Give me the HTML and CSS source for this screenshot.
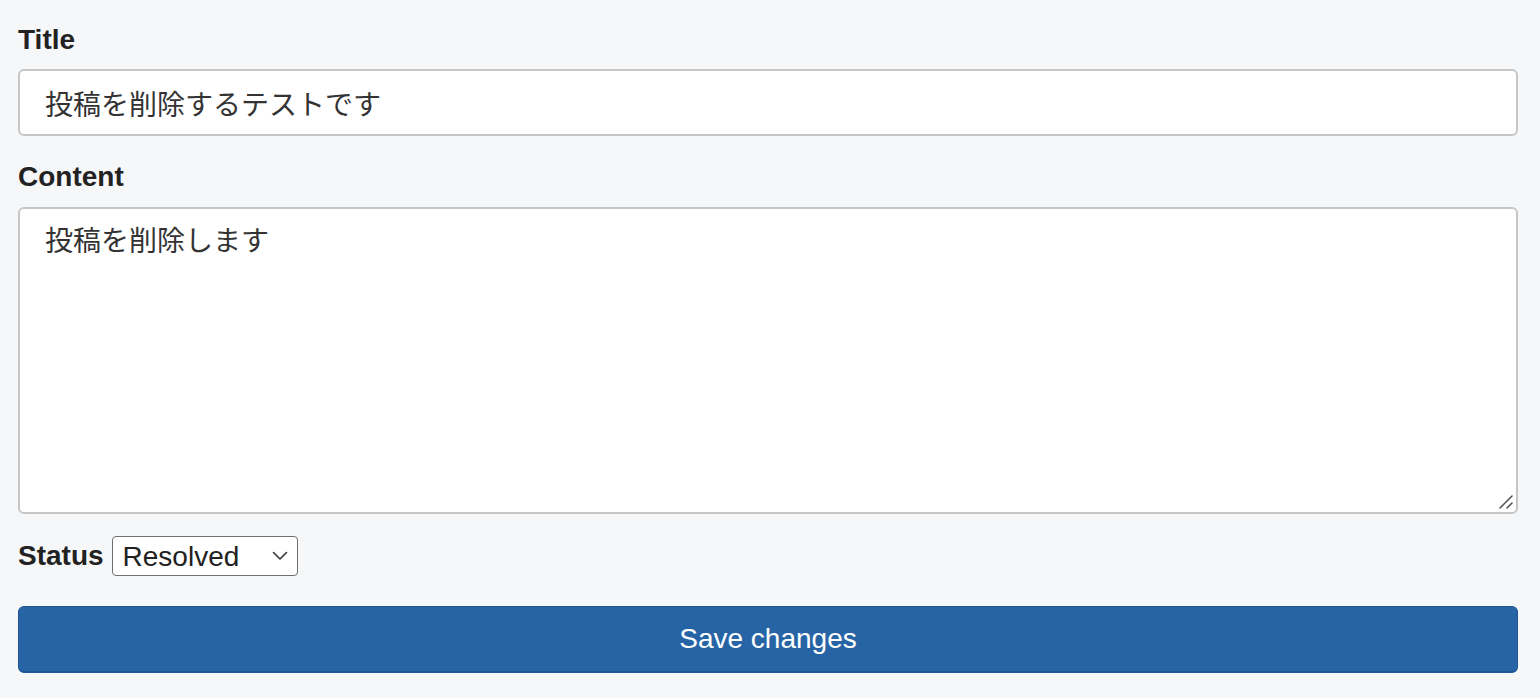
FILE: index.html
```html
<!DOCTYPE html>
<html lang="ja">
<head>
<meta charset="utf-8">
<title>Edit post</title>
<link rel="stylesheet" href="styles.css">
</head>
<body>
<form class="form">
  <label class="label" for="title">Title</label>
  <input class="input" id="title" type="text" value="投稿を削除するテストです">
  <label class="label label-content" for="content">Content</label>
  <div class="textarea-wrap">
    <textarea class="textarea" id="content">投稿を削除します</textarea>
    <svg class="grip" width="14" height="14" viewBox="0 0 14 14"><path d="M1 13 L13 1 M8 13 L13 8" fill="none" stroke="#555" stroke-width="1.6" stroke-linecap="round"/></svg>
  </div>
  <div class="status-row">
    <label class="label label-inline" for="status">Status</label>
    <div class="select-wrap">
      <select class="select" id="status">
        <option>Open</option>
        <option selected>Resolved</option>
      </select>
      <svg class="chevron" width="16" height="10" viewBox="0 0 16 10"><path d="M1.5 1.5 L8 8 L14.5 1.5" fill="none" stroke="#333" stroke-width="1.6" stroke-linecap="round" stroke-linejoin="round"/></svg>
    </div>
  </div>
  <button class="btn" type="button">Save changes</button>
</form>
</body>
</html>
```
FILE: styles.css
```css
html, body {
  margin: 0;
  padding: 0;
  background: #f6f7f9;
}
body {
  font-family: "Liberation Sans", Arial, "Noto Sans CJK JP", sans-serif;
  color: #222;
}
.form {
  display: flex;
  flex-direction: column;
  padding: 23px 22px 0 18px;
}
.label {
  display: block;
  font-size: 28px;
  font-weight: bold;
  line-height: 34px;
  margin-bottom: 12px;
  color: #222;
}
.label-content {
  margin-top: 24px;
  margin-bottom: 13px;
}
.label-inline {
  margin: 0;
}
.input,
.textarea {
  box-sizing: border-box;
  width: 100%;
  border: 2px solid #c6c6c6;
  border-radius: 6px;
  background: #fff;
  font-family: "Liberation Sans", Arial, "Noto Sans CJK JP", sans-serif;
  font-size: 28px;
  color: #333;
  margin: 0;
  outline: none;
}
.input {
  height: 67px;
  padding: 0 25px;
}
.textarea-wrap {
  position: relative;
}
.textarea {
  height: 307px;
  padding: 13px 25px;
  line-height: 1.4;
  resize: none;
  display: block;
}
.grip {
  position: absolute;
  right: 5px;
  bottom: 5px;
  pointer-events: none;
}
.status-row {
  display: flex;
  align-items: center;
  gap: 8px;
  margin-top: 22px;
}
.select-wrap {
  position: relative;
}
.select {
  appearance: none;
  -webkit-appearance: none;
  box-sizing: border-box;
  width: 186px;
  height: 40px;
  border: 1.5px solid #6e6e6e;
  border-radius: 4px;
  background: #fff;
  font-family: "Liberation Sans", Arial, sans-serif;
  font-size: 28px;
  color: #222;
  padding: 0 0 0 10px;
  margin: 0;
  outline: none;
}
.chevron {
  position: absolute;
  right: 10px;
  top: 15px;
  pointer-events: none;
}
.btn {
  margin-top: 30px;
  box-sizing: border-box;
  width: 100%;
  height: 67px;
  background: #2764a6;
  border: 1px solid #1f5592;
  border-bottom-width: 2px;
  border-radius: 6px;
  color: #fff;
  font-family: "Liberation Sans", Arial, sans-serif;
  font-size: 28px;
  cursor: pointer;
}
```
